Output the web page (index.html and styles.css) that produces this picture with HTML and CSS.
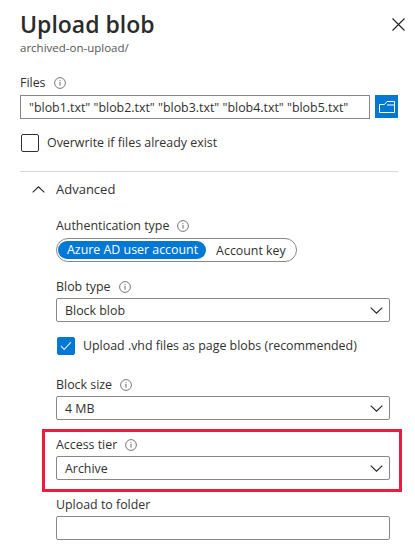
FILE: index.html
```html
<!DOCTYPE html>
<html lang="en">
<head>
    <meta charset="UTF-8">
    <meta name="viewport" content="width=device-width, initial-scale=1.0">
    <title>Upload blob</title>
    <link rel="stylesheet" href="styles.css">
</head>
<body>
    <svg class="defs" width="0" height="0" aria-hidden="true">
        <symbol id="info" viewBox="0 0 12 12">
            <circle cx="6" cy="6" r="5.4" fill="none" stroke="#777" stroke-width="1"/>
            <rect x="5.5" y="5" width="1" height="3.6" fill="#666"/>
            <rect x="5.5" y="3.2" width="1" height="1" fill="#666"/>
        </symbol>
        <symbol id="chevron" viewBox="0 0 13 7">
            <path d="M0.7 0.6 L6.5 6.2 L12.3 0.6" fill="none" stroke="#222" stroke-width="1.1"/>
        </symbol>
    </svg>

    <div class="panel">
        <header class="panel-head">
            <div>
                <h1>Upload blob</h1>
                <div class="subtitle">archived-on-upload/</div>
            </div>
            <svg class="close" width="13" height="13" viewBox="0 0 13 13">
                <path d="M0.5 0.5 L12.5 12.5 M12.5 0.5 L0.5 12.5" stroke="#222" stroke-width="1.1" fill="none"/>
            </svg>
        </header>

        <div class="label files-label">Files <svg class="info"><use href="#info"/></svg></div>
        <div class="file-row">
            <div class="box file-input">"blob1.txt" "blob2.txt" "blob3.txt" "blob4.txt" "blob5.txt"</div>
            <div class="browse">
                <svg width="16" height="12" viewBox="0 0 16 12">
                    <path d="M0.5 3.5 V11.5 H15.5 V0.5 H8 L5.5 3.5 Z M8 4 H15.5" fill="none" stroke="#fff" stroke-width="1"/>
                </svg>
            </div>
        </div>

        <div class="check-row overwrite">
            <span class="check"></span>
            <span>Overwrite if files already exist</span>
        </div>

        <div class="divider"></div>

        <div class="advanced-head">
            <svg class="chevron-up" width="13" height="7"><use href="#chevron"/></svg>
            <span>Advanced</span>
        </div>

        <div class="advanced">
            <div class="label">Authentication type <svg class="info"><use href="#info"/></svg></div>
            <div class="toggle">
                <span class="toggle-on">Azure AD user account</span>
                <span class="toggle-off">Account key</span>
            </div>

            <div class="label blob-type">Blob type <svg class="info"><use href="#info"/></svg></div>
            <div class="box select">Block blob <svg class="chevron" width="13" height="7"><use href="#chevron"/></svg></div>

            <div class="check-row vhd">
                <span class="check checked">
                    <svg width="12" height="10" viewBox="0 0 12 10"><path d="M1 5 L4.2 8.4 L11 1.2" fill="none" stroke="#dbeafa" stroke-width="1.1"/></svg>
                </span>
                <span>Upload .vhd files as page blobs (recommended)</span>
            </div>

            <div class="label block-size">Block size <svg class="info"><use href="#info"/></svg></div>
            <div class="box select">4 MB <svg class="chevron" width="13" height="7"><use href="#chevron"/></svg></div>

            <div class="highlight">
                <div class="label">Access tier <svg class="info"><use href="#info"/></svg></div>
                <div class="box select">Archive <svg class="chevron" width="13" height="7"><use href="#chevron"/></svg></div>
            </div>

            <div class="label folder">Upload to folder</div>
            <div class="box select"></div>
        </div>
    </div>
</body>
</html>
```

FILE: styles.css
```css
html, body {
    height: 100%;
}
body {
    font-family: "Open Sans", "Noto Sans", sans-serif;
    font-size: 12.4px;
    color: #323130;
    background-color: white;
    margin: 0;
    overflow: hidden;
}
.defs {
    display: block;
    height: 0;
}
.panel {
    padding: 10px 17px 0 20px;
}
.panel-head {
    display: flex;
    justify-content: space-between;
    align-items: flex-start;
    height: 58px;
}
h1 {
    font-size: 23px;
    font-weight: 600;
    line-height: 28px;
    margin: 0;
    color: #2b2b2b;
}
.subtitle {
    font-size: 11.5px;
    line-height: 16px;
    margin-top: 2px;
    color: #555;
}
.close {
    margin: 8px -7px 0 0;
}
.label {
    display: flex;
    align-items: center;
    gap: 8px;
    line-height: 18px;
    height: 18px;
}
.info {
    width: 12px;
    height: 12px;
}
.files-label {
    margin-top: 6px;
}
.file-row {
    display: flex;
    gap: 5px;
    margin-top: 3px;
}
.box {
    box-sizing: border-box;
    height: 24px;
    border: 1px solid #8a8886;
    border-radius: 2px;
    display: flex;
    align-items: center;
    background-color: white;
}
.file-input {
    width: 350px;
    padding-left: 8px;
    border-radius: 0;
    white-space: nowrap;
}
.browse {
    width: 23px;
    height: 23px;
    background-color: #0078d4;
    display: flex;
    align-items: center;
    justify-content: center;
}
.check-row {
    display: flex;
    align-items: center;
    gap: 8px;
    line-height: 18px;
}
.check {
    box-sizing: border-box;
    width: 18px;
    height: 18px;
    border: 1px solid #323130;
    border-radius: 2px;
    display: flex;
    align-items: center;
    justify-content: center;
    flex: none;
}
.checked {
    background-color: #0078d4;
    border-color: #0078d4;
}
.overwrite {
    margin: 15px 0 0 1px;
}
.divider {
    height: 1px;
    background-color: #d6d6d6;
    margin-top: 19px;
}
.advanced-head {
    display: flex;
    align-items: center;
    gap: 11px;
    margin: 8px 0 0 12px;
    font-size: 13px;
    line-height: 18px;
}
.chevron-up {
    transform: rotate(180deg);
}
.advanced {
    margin: 18px 8px 0 36px;
}
.advanced .label {
    box-sizing: border-box;
    padding-top: 2px;
}
.toggle {
    box-sizing: border-box;
    width: 241px;
    height: 24px;
    margin-top: 4px;
    border: 1px solid #8a8886;
    border-radius: 12px;
    padding: 2px 0 2px 1px;
    display: flex;
    align-items: center;
}
.toggle-on {
    background-color: #0078d4;
    color: white;
    border-radius: 9px;
    height: 18px;
    line-height: 18px;
    padding: 0 8px 0 9px;
}
.toggle-off {
    padding-left: 10px;
}
.select {
    justify-content: space-between;
    padding: 0 6px 0 8px;
    margin-top: 3px;
}
.chevron {
    flex: none;
}
.blob-type {
    margin-top: 15px;
}
.vhd {
    margin: 15px 0 0 1px;
}
.block-size {
    margin-top: 20px;
}
.highlight {
    position: relative;
    margin-top: 15px;
}
.highlight::after {
    content: "";
    position: absolute;
    top: -6px;
    bottom: -12px;
    left: -14px;
    right: -12px;
    border: 3px solid #ec1c3e;
    pointer-events: none;
}
.folder {
    margin-top: 15px;
}
```
